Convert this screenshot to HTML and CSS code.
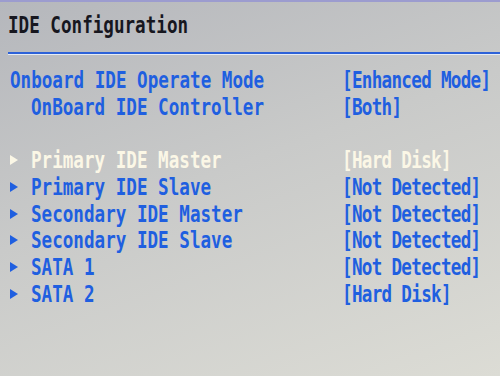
FILE: index.html
```html
<!DOCTYPE html>
<html lang="en">
<head>
  <meta charset="UTF-8">
  <title>IDE Configuration</title>
  <link rel="stylesheet" href="styles.css">
</head>
<body>
  <div class="screen">
    <div class="title"><span class="txt">IDE Configuration</span></div>
    <div class="rule"></div>

    <div class="rows">
      <div class="row">
        <div class="label"><span class="txt">Onboard IDE Operate Mode</span></div>
        <div class="value"><span class="txt">[Enhanced Mode]</span></div>
      </div>
      <div class="row">
        <div class="label sub"><span class="txt">OnBoard IDE Controller</span></div>
        <div class="value"><span class="txt">[Both]</span></div>
      </div>
      <div class="row"></div>
      <div class="row item active">
        <div class="label sub"><span class="txt">Primary IDE Master</span></div>
        <div class="value"><span class="txt">[Hard Disk]</span></div>
      </div>
      <div class="row item">
        <div class="label sub"><span class="txt">Primary IDE Slave</span></div>
        <div class="value"><span class="txt">[Not Detected]</span></div>
      </div>
      <div class="row item">
        <div class="label sub"><span class="txt">Secondary IDE Master</span></div>
        <div class="value"><span class="txt">[Not Detected]</span></div>
      </div>
      <div class="row item">
        <div class="label sub"><span class="txt">Secondary IDE Slave</span></div>
        <div class="value"><span class="txt">[Not Detected]</span></div>
      </div>
      <div class="row item">
        <div class="label sub"><span class="txt">SATA 1</span></div>
        <div class="value"><span class="txt">[Not Detected]</span></div>
      </div>
      <div class="row item">
        <div class="label sub"><span class="txt">SATA 2</span></div>
        <div class="value"><span class="txt">[Hard Disk]</span></div>
      </div>
    </div>
  </div>
</body>
</html>
```

FILE: styles.css
```css
html, body {
  margin: 0;
  height: 100%;
}
body {
  font-family: "DejaVu Sans Mono", "Liberation Mono", monospace;
  font-weight: bold;
  font-size: 17.6px;
  background: linear-gradient(160deg, #b5b7bc 0%, #c9cac9 45%, #dcdcd5 100%);
  border-top: 2px solid #9c9ccf;
  box-sizing: border-box;
  overflow: hidden;
}
.screen {
  padding: 10px 0 0 8px;
}
.txt {
  display: inline-block;
  transform: scaleY(1.32);
  white-space: pre;
}
.title {
  height: 26.7px;
  line-height: 26.7px;
  color: #17171f;
}
.rule {
  margin-top: 13px;
  height: 2px;
  background: #2d62d8;
  border-bottom: 1px solid #e6ecf4;
}
.rows {
  margin-top: 12.4px;
  padding-left: 2px;
}
.row {
  display: flex;
  height: 26.7px;
  line-height: 26.7px;
  color: #1f5fe0;
}
.label {
  width: 332px;
}
.label.sub {
  padding-left: 21px;
  width: 311px;
}
.value .txt {
  letter-spacing: -0.7px;
}
.item {
  position: relative;
}
.item::before {
  content: "";
  position: absolute;
  left: 0;
  top: 8px;
  border-left: 8px solid #1f5fe0;
  border-top: 5.5px solid transparent;
  border-bottom: 5.5px solid transparent;
}
.active {
  color: #fbf7e6;
}
.active::before {
  border-left-color: #fbf7e6;
}
```
